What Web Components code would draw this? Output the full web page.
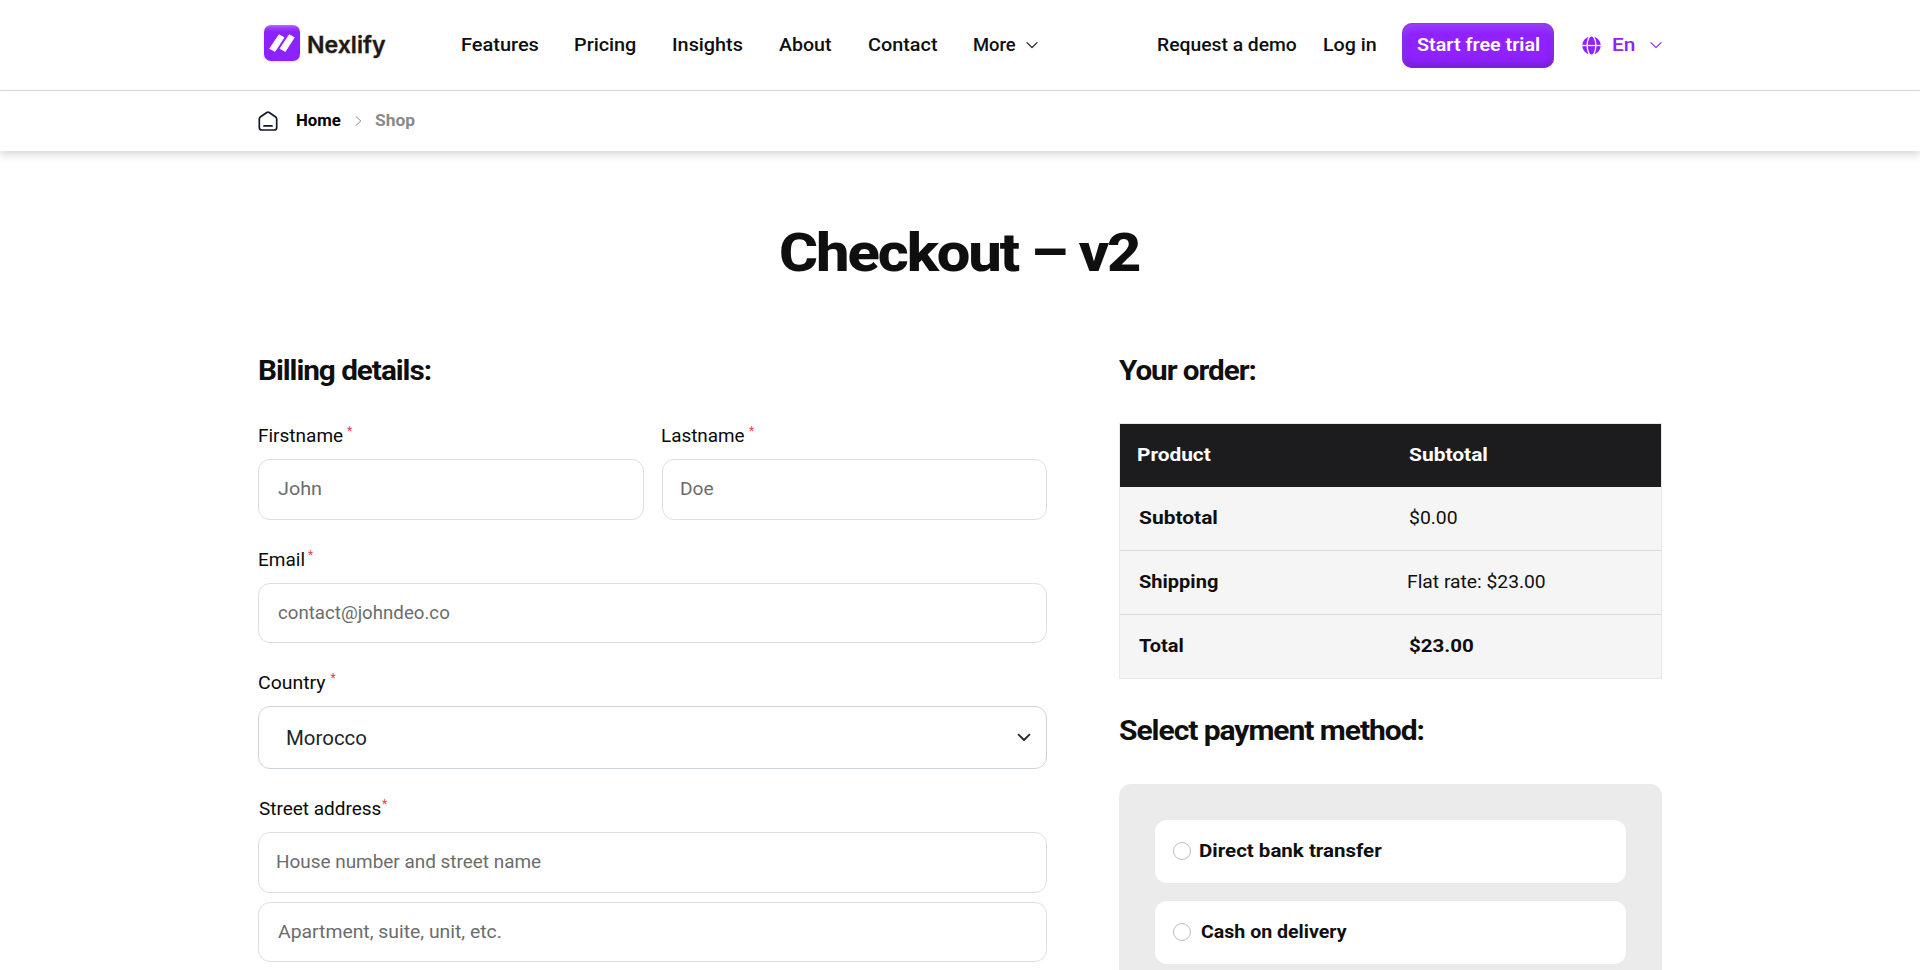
<!DOCTYPE html>
<html lang="en">
<head>
<meta charset="utf-8">
<title>Checkout – v2</title>
<style>
html,body{margin:0;background:#fff;overflow:hidden}
body{font-family:Roboto,"Liberation Sans",sans-serif;color:#0f0f0f;height:970px}
</style>
</head>
<body>
<checkout-page></checkout-page>
<script>
const define=(name,html,setup)=>customElements.define(name,class extends HTMLElement{
  connectedCallback(){
    if(this.shadowRoot)return;
    const t=document.createElement('template');
    t.innerHTML=html;
    this.attachShadow({mode:'open'}).append(t.content.cloneNode(true));
    if(setup)setup(this,this.shadowRoot);
  }
});

/* A line of text whose ink spans exactly `w` pixels: the inherited --track (em)
   sets the letter spacing, and the glyphs are widened to fill the rest. */
const pen=document.createElement('canvas').getContext('2d');
define('fit-text',`<style>
:host{display:inline-block;white-space:nowrap;flex:none}
span{display:inline-block;transform-origin:0 50%}
</style><span><slot></slot></span>`,(el,root)=>{
  const s=getComputedStyle(el),text=el.textContent,w=+el.getAttribute('w');
  const track=(parseFloat(s.getPropertyValue('--track'))||0)*parseFloat(s.fontSize);
  pen.font=`${s.fontWeight} ${s.fontSize} ${s.fontFamily}`;
  const m=pen.measureText(text);
  const ink=m.actualBoundingBoxRight+m.actualBoundingBoxLeft+track*(text.length-1);
  const k=w/ink;
  const span=root.querySelector('span');
  span.style.letterSpacing=track.toFixed(3)+'px';
  span.style.marginLeft=(m.actualBoundingBoxLeft*k).toFixed(2)+'px';
  span.style.transform=`scaleX(${k.toFixed(4)})`;
  el.style.width=w+'px';
});

define('icon-chevron',`<style>
:host{display:block;flex:none}svg{display:block;width:100%;height:100%;overflow:visible}
</style><svg viewBox="0 0 12 7" fill="none" stroke="currentColor" stroke-linecap="round" stroke-linejoin="round"><path d="M.6 .6 6 6 11.4 .6"/></svg>`,(el,root)=>{
  root.querySelector('svg').setAttribute('stroke-width',el.getAttribute('weight')||'1.2');
});

define('brand-logo',`<style>
:host{display:flex;align-items:center;gap:8.500px;width:123px}
.mark{width:36px;height:36px;border-radius:7px;background:linear-gradient(#b46cff 0,#9a3bff 3px,#8c22ff 7px,#8c22ff);box-shadow:0 1px 3px #0002}
svg{display:block}
.name{font:600 23px/36px Inter,sans-serif;color:#1f1a14;text-shadow:0 1px 2px #0002;-webkit-text-stroke:.3px #1f1a14;margin-top:3px}
</style><div class="mark"><svg width="36" height="36" viewBox="0 0 36 36" fill="#fff" stroke="#fff" stroke-linejoin="round" stroke-width=".8"><path d="M15 9.700 20 12.500 11 26.400 5.700 23.600zM25.300 9.700l5 2.800-9 13.900-5.300-2.800z"/></svg></div>
<div class="name"><fit-text w="78">Nexlify</fit-text></div>`);

define('top-nav',`<style>
:host{display:block;height:90px;border-bottom:1px solid #dcdcdc;font-size:18px;font-weight:500;line-height:24px}
.in{width:1404px;height:90px;margin:0 auto;display:flex;align-items:center}
brand-logo{margin:-4px 0 0 5.500px}
nav{display:flex;gap:36.600px;margin-left:75.500px;align-items:center}
.more{display:flex;align-items:center;gap:10px}
icon-chevron{width:12px;height:6.500px}
.right{display:flex;align-items:center;margin-left:auto}
.cta{margin-left:26.500px;width:152px;height:45px;border-radius:10px;box-sizing:border-box;display:flex;align-items:center;justify-content:center;color:#fff;font-weight:600;background:#8f22ff;box-shadow:inset 0 0 0 1px #7d2ae04d,inset 0 5px 7px #ffffff28,inset 0 -4px 8px #4a1a8058,inset -2px 0 5px #4a1a8025}
.lang{display:flex;align-items:center;color:#8f22ff;margin-left:28px;gap:12px}
.lang svg{display:block}
.lang icon-chevron{margin-left:4px}
</style><div class="in"><brand-logo></brand-logo>
<nav><fit-text w="76.5">Features</fit-text><fit-text w="61">Pricing</fit-text><fit-text w="69.5">Insights</fit-text><fit-text w="52.5">About</fit-text><fit-text w="69.5">Contact</fit-text><div class="more"><fit-text w="42">More</fit-text><icon-chevron></icon-chevron></div></nav>
<div class="right"><fit-text w="138.5">Request a demo</fit-text><fit-text w="51.5" style="margin-left:27.5px">Log in</fit-text>
<div class="cta"><fit-text w="122.5">Start free trial</fit-text></div>
<div class="lang"><svg width="19" height="19" viewBox="0 0 19 19"><circle cx="9.500" cy="9.500" r="9.300" fill="currentColor"/><g fill="none" stroke="#fff" stroke-width="1.300"><path d="M0 9.500h19"/><ellipse cx="9.500" cy="9.500" rx="4.300" ry="10"/></g></svg><fit-text w="21">En</fit-text><icon-chevron></icon-chevron></div></div></div>`);

define('bread-crumb',`<style>
:host{display:block;height:60px;box-shadow:0 4px 8px #00000026;font-size:16px;font-weight:700;line-height:22px}
.in{width:1404px;height:59px;margin:0 auto;display:flex;align-items:center}
svg{display:block;flex:none}
.home{color:#000}
.shop{color:#8a8a8a}
</style><div class="in"><svg width="20" height="20" viewBox="0 0 20 20" fill="none" stroke="#111827" stroke-width="1.700" stroke-linecap="round" stroke-linejoin="round"><path d="M1.300 7.900Q1.300 6.700 2.300 6L8.800 1.500Q10 .7 11.200 1.500L17.700 6Q18.700 6.700 18.700 7.900V16.500Q18.700 19 16.200 19H3.800Q1.300 19 1.300 16.500ZM6 14.900h8"/></svg>
<fit-text class="home" w="44" style="margin-left:19.5px">Home</fit-text>
<svg width="7" height="10" viewBox="0 0 7 10" fill="none" stroke="#8a8a8a" stroke-linecap="round" style="margin-left:13.5px"><path d="M1 .5 5.800 5 1 9.500"/></svg>
<fit-text class="shop" w="40" style="margin-left:13px">Shop</fit-text></div>`);

define('section-title',`<style>
:host{display:block;font-size:28px;font-weight:700;line-height:34px;height:34px;--track:-.035}
</style><slot></slot>`);

define('field-label',`<style>
:host{display:flex;font-size:18px;line-height:24px;height:24px;margin-bottom:11px;padding-left:1px;color:#0a0a0a}
i{font:400 12px/16px Roboto,sans-serif;color:#f03a46;margin:-1px 0 0 4.500px}
:host([tight]) i{margin-left:1px}
</style><slot></slot><i>*</i>`);

define('text-field',`<style>
:host{display:flex;align-items:center;box-sizing:border-box;height:61px;border:1px solid #dedede;border-radius:12px;padding:0 18.500px 1px;font-size:18px;line-height:24px;color:#6c6c6c;background:#fff}
:host([short]){height:60px;padding-bottom:0}
</style><slot></slot>`);

define('select-field',`<style>
:host{display:flex;align-items:center;justify-content:space-between;box-sizing:border-box;height:63px;border:1px solid #ced4da;border-radius:12px;padding:0 16px 0 28px;font-size:20px;line-height:28px;color:#212529;background:#fff}
icon-chevron{width:12px;height:7px}
</style><slot></slot><icon-chevron weight="1.8"></icon-chevron>`);

define('billing-form',`<style>
:host{display:block;width:789px}
.pair{display:grid;grid-template-columns:1fr 1fr;gap:18px}
section-title{margin-bottom:36px;padding-left:1px}
.group{margin-bottom:28px}
.stack{display:grid;gap:9px}
</style>
<section-title><fit-text w="172">Billing details:</fit-text></section-title>
<div class="pair group"><div><field-label><fit-text w="83.5">Firstname</fit-text></field-label><text-field><fit-text w="43">John</fit-text></text-field></div>
<div><field-label><fit-text w="82">Lastname</fit-text></field-label><text-field><fit-text w="32">Doe</fit-text></text-field></div></div>
<div class="group"><field-label><fit-text w="44.5">Email</fit-text></field-label><text-field short><fit-text w="171.5">contact@johndeo.co</fit-text></text-field></div>
<div class="group"><field-label><fit-text w="67">Country</fit-text></field-label><select-field><fit-text w="79.5">Morocco</fit-text></select-field></div>
<field-label tight><fit-text w="122">Street address</fit-text></field-label>
<div class="stack"><text-field><fit-text w="263.5">House number and street name</fit-text></text-field><text-field short><fit-text w="223">Apartment, suite, unit, etc.</fit-text></text-field></div>`);

define('order-table',`<style>
:host{display:block;border:1px solid #e9e9e9;background:#f5f5f5;font-size:18px;line-height:24px}
.row{display:grid;grid-template-columns:270px 1fr;align-items:center;box-sizing:border-box;height:64px;padding:0 0 2px 18.500px}
.row+.row{border-top:1px solid #d9d9d9}
.head{background:#1c1c1e;color:#fff;height:63px}
.head+.row{border-top:0;height:63px}
b,.head{font-weight:700}
</style>
<div class="row head"><fit-text w="72.5">Product</fit-text><fit-text w="78">Subtotal</fit-text></div>
<div class="row"><b><fit-text w="78">Subtotal</fit-text></b><fit-text w="48.5">$0.00</fit-text></div>
<div class="row"><b><fit-text w="79">Shipping</fit-text></b><fit-text w="137.5">Flat rate: $23.00</fit-text></div>
<div class="row"><b><fit-text w="44">Total</fit-text></b><b><fit-text w="64.5">$23.00</fit-text></b></div>`);

define('pay-option',`<style>
:host{display:flex;align-items:center;gap:9.500px;height:63px;padding-left:18px;border-radius:12px;background:#fff;font-size:18px;font-weight:700;line-height:24px}
.dot{box-sizing:border-box;width:18px;height:18px;border:1px solid #bdbdbd;border-radius:50%;margin-top:-1px}
::slotted(*){margin-top:-1px}
</style><span class="dot"></span><slot></slot>`);

define('order-summary',`<style>
:host{display:block;width:543px}
order-table{margin:35px 0}
.panel{display:grid;gap:18px;margin-top:36px;padding:36px 36px 60px;border-radius:12px;background:#ebebeb}
</style>
<section-title><fit-text w="137">Your order:</fit-text></section-title>
<order-table></order-table>
<section-title><fit-text w="305">Select payment method:</fit-text></section-title>
<div class="panel"><pay-option><fit-text w="182">Direct bank transfer</fit-text></pay-option><pay-option><fit-text w="146.5">Cash on delivery</fit-text></pay-option></div>`);

define('checkout-page',`<style>
:host{display:block;height:970px;overflow:hidden}
h1{margin:72px 0 71px;text-align:center;font-size:54px;font-weight:800;line-height:60px;height:60px;--track:-.035}
main{width:1404px;margin:0 auto;display:flex;justify-content:space-between}
</style><top-nav></top-nav><bread-crumb></bread-crumb>
<h1><fit-text w="359" style="text-align:left;margin-left:2px">Checkout – v2</fit-text></h1>
<main><billing-form></billing-form><order-summary></order-summary></main>`);
</script>
</body>
</html>
